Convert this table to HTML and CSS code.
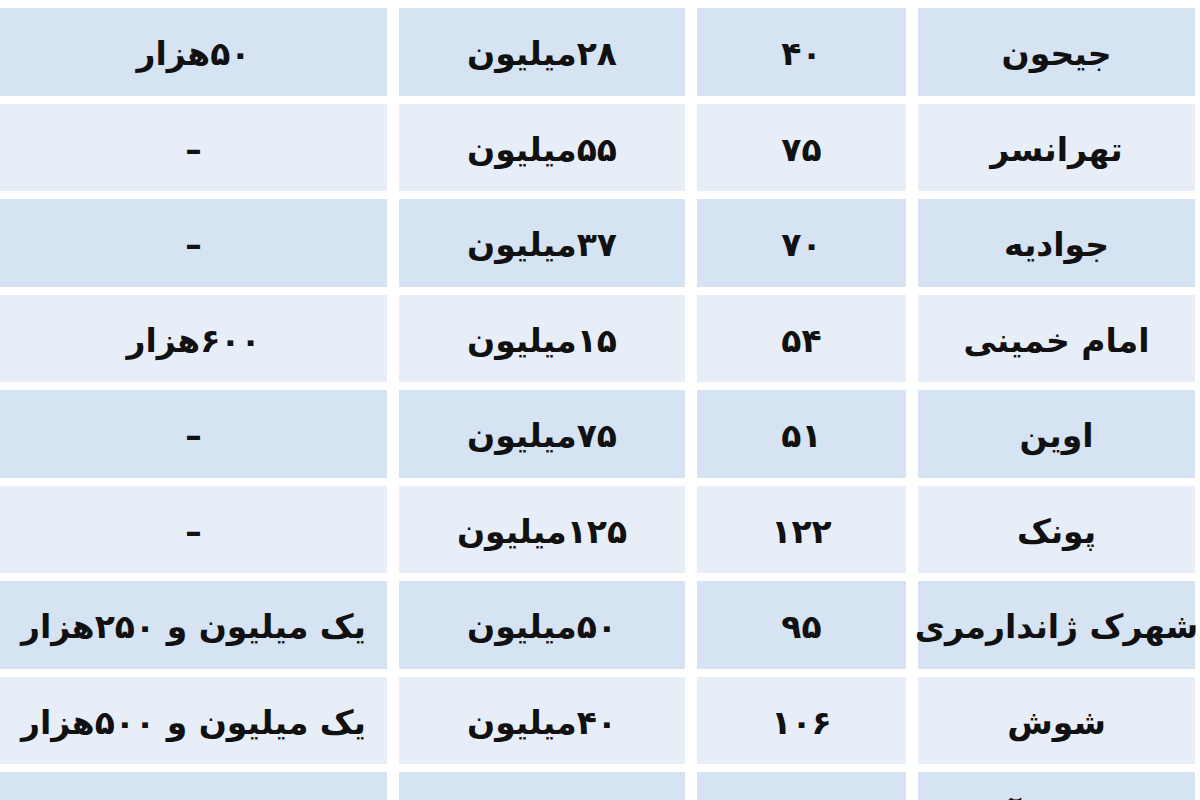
FILE: index.html
```html
<!DOCTYPE html>
<html lang="fa">
<head>
<meta charset="utf-8">
<title>جدول</title>
<link rel="stylesheet" href="styles.css">
</head>
<body>
<div class="table">
  <div class="row dark"><div class="cell name">جیحون</div><div class="cell area">۴۰</div><div class="cell price">۲۸میلیون</div><div class="cell rent">۵۰هزار</div></div>
  <div class="row light"><div class="cell name">تهرانسر</div><div class="cell area">۷۵</div><div class="cell price">۵۵میلیون</div><div class="cell rent">–</div></div>
  <div class="row dark"><div class="cell name">جوادیه</div><div class="cell area">۷۰</div><div class="cell price">۳۷میلیون</div><div class="cell rent">–</div></div>
  <div class="row light"><div class="cell name">امام خمینی</div><div class="cell area">۵۴</div><div class="cell price">۱۵میلیون</div><div class="cell rent">۶۰۰هزار</div></div>
  <div class="row dark"><div class="cell name">اوین</div><div class="cell area">۵۱</div><div class="cell price">۷۵میلیون</div><div class="cell rent">–</div></div>
  <div class="row light"><div class="cell name">پونک</div><div class="cell area">۱۲۲</div><div class="cell price">۱۲۵میلیون</div><div class="cell rent">–</div></div>
  <div class="row dark"><div class="cell name">شهرک ژاندارمری</div><div class="cell area">۹۵</div><div class="cell price">۵۰میلیون</div><div class="cell rent">یک میلیون و ۲۵۰هزار</div></div>
  <div class="row light"><div class="cell name">شوش</div><div class="cell area">۱۰۶</div><div class="cell price">۴۰میلیون</div><div class="cell rent">یک میلیون و ۵۰۰هزار</div></div>
  <div class="row dark"><div class="cell name">سعادت آباد</div><div class="cell area">۱۱۰</div><div class="cell price">۱۰۰میلیون</div><div class="cell rent">۴ میلیون و ۵۰۰هزار</div></div>
</div>
</body>
</html>
```

FILE: styles.css
```css
html, body {
  margin: 0;
  padding: 0;
  background: #ffffff;
  overflow: hidden;
}
body {
  width: 1200px;
  height: 800px;
  font-family: "DejaVu Sans", "Noto Sans", sans-serif;
  color: #111111;
}
.table {
  padding-top: 8px;
  display: flex;
  flex-direction: column;
  gap: 8px;
  width: 1195px;
}
.row {
  display: grid;
  grid-template-columns: 387px 286px 209px 277px;
  column-gap: 12px;
  height: 87.5px;
}
.cell {
  direction: rtl;
  display: flex;
  align-items: center;
  justify-content: center;
  font-weight: bold;
  font-size: 33px;
  line-height: 1;
  white-space: nowrap;
  overflow: visible;
  padding-top: 4px;
  box-sizing: border-box;
}
.row .rent { order: 1; }
.row .price { order: 2; }
.row .area { order: 3; }
.row .name { order: 4; }
.dark .cell { background: #d5e3f3; }
.light .cell { background: #e8eef8; }
```
